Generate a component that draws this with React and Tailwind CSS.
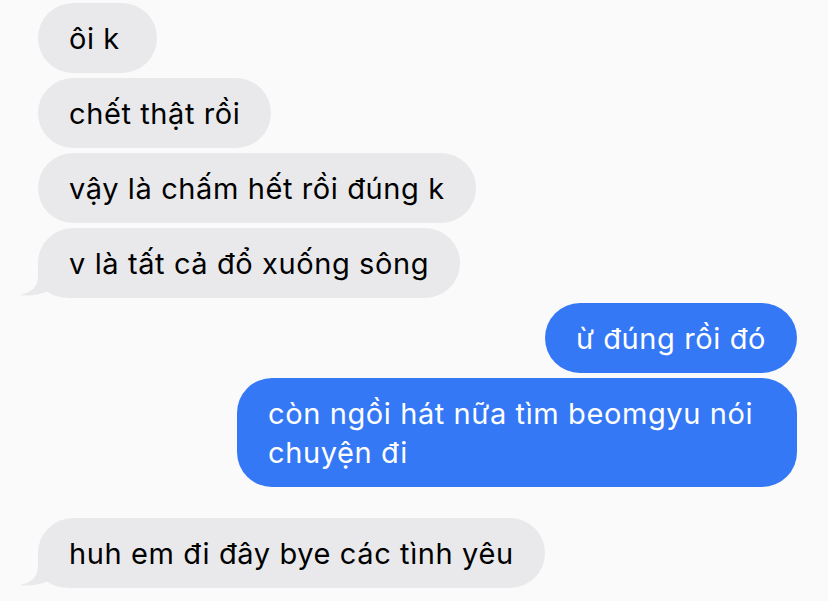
import React from 'react';

const FONT = { fontFamily: 'Inter, "Noto Sans", sans-serif' };

// little tail drawn at the bottom-left of the last bubble of a group
const Tail = () => (
    <svg
        className="absolute left-[-18px] bottom-0"
        width="52"
        height="34"
        viewBox="0 0 52 34"
    >
        <path
            d="M18 0 L18 12 C18 22 13 28 0 31 C9 32.5 19 31 27 27.5 C33 32 42 34 52 34 L52 0 Z"
            fill="#e9e9eb"
        />
    </svg>
);

const Incoming = ({ text, tail, className = '' }) => (
    <div className={`relative ml-[38px] bg-[#e9e9eb] text-black rounded-[35px] px-[31px] py-[15.5px] text-[29px] leading-[39px] tracking-[0.6px] ${className}`}>
        {tail && <Tail />}
        <span className="relative">{text}</span>
    </div>
);

const Outgoing = ({ children, className = '' }) => (
    <div className={`self-end mr-[31px] bg-[#3478f6] text-white rounded-[35px] px-[31px] py-[15.5px] text-[29px] leading-[39px] tracking-[0.6px] ${className}`}>
        {children}
    </div>
);

const App = () => {
    return (
        <div className="w-[828px] h-[601px] overflow-hidden bg-[#fafafb]" style={FONT}>
            <div className="flex flex-col items-start gap-[5px] pt-[3px]">
                <Incoming text="ôi k" className="min-w-[119px]" />
                <Incoming text="chết thật rồi" />
                <Incoming text="vậy là chấm hết rồi đúng k" />
                <Incoming text="v là tất cả đổ xuống sông" tail />

                <Outgoing>ừ đúng rồi đó</Outgoing>
                <Outgoing className="w-[560px]">
                    còn ngồi hát nữa tìm beomgyu nói
                    <br />
                    chuyện đi
                </Outgoing>

                <Incoming text="huh em đi đây bye các tình yêu" tail className="mt-[26px]" />
            </div>
        </div>
    );
};

export default App;
